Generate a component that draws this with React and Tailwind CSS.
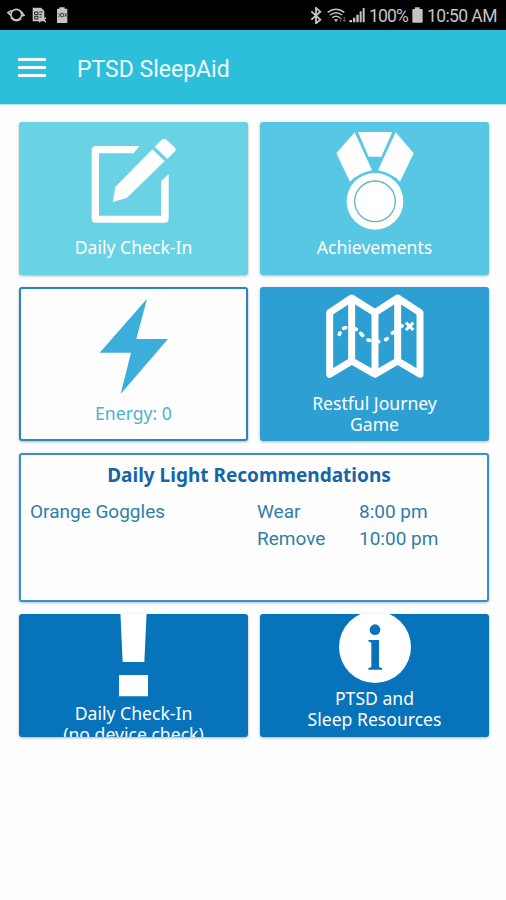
import React from 'react';
import clsx from 'clsx';

function StatusBar() {
  return (
    <div className="h-[30px] bg-black text-[#c4c4c4] flex items-center justify-between pl-[7px] pr-[9px]">
      <div className="flex items-center">
        <svg className="w-[18px] h-[16px]" viewBox="22 22 54 48" fill="none" stroke="currentColor" strokeWidth="5">
          <circle cx="50" cy="45" r="16" />
          <path d="M36 32l-11 7 9 8M64 35l9 12-9 2M34 54q15 16 30 3" />
        </svg>
        <svg className="w-[15px] h-[16px] ml-[7px]" viewBox="95 22 45 48">
          <path d="M97 24h25l10 10v31H97z" fill="currentColor" />
          <path d="M103 37h10v8h-10zM103 50h10v8h-10zM117 37h10M117 45h8M118 52h6" fill="none" stroke="#222" strokeWidth="3" />
          <path d="M117 68l6-12M125 48l11 20M137 54l-14 10" stroke="currentColor" strokeWidth="4" />
        </svg>
        <svg className="w-[12px] h-[16px] ml-[9px]" viewBox="168 22 36 48">
          <path d="M178 23h16v4h8v43h-31V27h7z" fill="currentColor" />
          <path d="M174 41l6 6-6 6M182 41h8v10h-8zM194 41l6 10M200 41l-6 10" fill="none" stroke="#333" strokeWidth="2.5" />
        </svg>
      </div>
      <div className="flex items-center">
        <svg className="w-[12px] h-[17px]" viewBox="56 20 36 51" fill="none" stroke="currentColor" strokeWidth="5.5">
          <path d="M60 33l27 25-13 11V23l13 11-27 24" />
        </svg>
        <svg className="w-[20px] h-[15px] ml-[5px]" viewBox="108 21 60 45" fill="none" stroke="currentColor" strokeWidth="4.5">
          <path d="M110 34q25-19 50 0M117 42q18-14 36 0M124 50q11-9 22 0" />
          <path d="M128 55h14l-7 8z" fill="currentColor" stroke="none" />
          <path d="M149 50v13M145 54l4-5 4 5M160 48v14M156 57l4 5 4-5" stroke="#777" strokeWidth="2.5" />
        </svg>
        <svg className="w-[16px] h-[16px] ml-[2px]" viewBox="175 22 48 48" fill="currentColor">
          <path d="M176 68v-7h8v7zM187 68V54h7v14zM197 68V45h7v23zM207 68V35h6v33zM216 68V25h6v43z" />
        </svg>
        <span className="w-[40px] ml-[4px] text-[17.5px] leading-[20px] tracking-[-0.8px] whitespace-nowrap pt-[2px]">100%</span>
        <svg className="w-[11px] h-[16px] ml-[3px]" viewBox="366 22 33 48" fill="currentColor">
          <path d="M375 23h14v5h6q3 0 3 3v35q0 3-3 3h-25q-3 0-3-3V31q0-3 3-3h5z" />
        </svg>
        <span className="w-[70px] ml-[4px] text-[17.5px] leading-[20px] tracking-[-0.6px] whitespace-nowrap pt-[2px]">10:50 AM</span>
      </div>
    </div>
  );
}

function CheckInIcon() {
  return (
    <svg className="w-[88px] h-[86px] mt-[16px] ml-[1px] shrink-0" viewBox="240 78 264 258" fill="#fff">
      <path d="M388 102L371 124H267V311H453V208L476 187V320Q476 332 464 332H257Q245 332 245 320V114Q245 102 257 102Z" />
      <path d="M427 112L464 147L350 258L308 270L316 225Z" />
      <path d="M434 104L455 83Q462 78 469 83L495 107Q500 112 495 118L472 141Z" />
    </svg>
  );
}

function MedalIcon() {
  return (
    <svg className="w-[80px] h-[100px] mt-[9px] shrink-0" viewBox="245 58 240 300" fill="#fff">
      <path d="M304 62L249 125L290 210Q315 184 356 176Z" />
      <path d="M427 62L481 125L440 210Q415 184 374 176Z" />
      <path d="M314 61H417L384 135H346Z" />
      <circle cx="365" cy="269" r="85" />
      <circle cx="365" cy="269" r="61" fill="none" stroke="#62b3bd" strokeWidth="4" />
    </svg>
  );
}

function BoltIcon() {
  return (
    <svg className="w-[70px] h-[98px] mt-[9px] shrink-0" viewBox="266 57 210 294" fill="#3caedb">
      <path d="M410 59L268 221H362L331 345L473 180H378Z" />
    </svg>
  );
}

function MapIcon() {
  return (
    <svg className="w-[100px] h-[86px] mt-[6px] shrink-0" viewBox="216 39 300 258" fill="none" stroke="#fff">
      <path
        d="M230 98L296 54L366 98L434 54L501 98V283L434 243L366 283L296 243L230 283ZM296 54V243M366 98V283M434 54V243"
        strokeWidth="21"
        strokeLinejoin="round"
      />
      <g strokeWidth="11" strokeLinecap="round">
        <path d="M259 163l2-4M272 145l6-2M308 147l2 1M323 160l6 6M345 180l5 1M373 186l4-1M398 179l5-3M418 159l5-3M444 139l3-1" />
      </g>
      <path d="M459 128l22 22M481 128l-22 22" strokeWidth="9" />
    </svg>
  );
}

function ExclamationIcon() {
  return (
    <svg className="w-[30px] h-[84px] shrink-0" viewBox="327 26 90 252" fill="#fff">
      <path d="M331 20H410L403 170H338Z" />
      <path d="M327 209H414V273H327Z" />
    </svg>
  );
}

function InfoIcon() {
  return (
    <svg className="w-[74px] h-[72px] shrink-0" viewBox="263 26 222 216">
      <circle cx="374" cy="125" r="108" fill="#fff" />
      <g fill="#0673ba">
        <circle cx="374" cy="73" r="16" />
        <path d="M354 104H386V185L395 189V193H354V189L363 185V112L354 108Z" />
      </g>
    </svg>
  );
}

function Tile({ icon, lines, className, labelClassName }) {
  return (
    <button
      className={clsx(
        'flex flex-col items-center overflow-hidden rounded-[3px] text-[17.6px] leading-[21px]',
        "font-['Noto_Sans',sans-serif] shadow-[0_1px_3px_rgba(0,0,0,0.3)]",
        className
      )}
    >
      {icon}
      <span className={clsx('flex flex-col items-center whitespace-nowrap shrink-0', labelClassName)}>
        {lines.map((line) => (
          <span key={line}>{line}</span>
        ))}
      </span>
    </button>
  );
}

export default function App() {
  return (
    <div className="w-[506px] h-[900px] overflow-hidden bg-[#fefefe] font-[Roboto,sans-serif]">
      <StatusBar />
      <header className="h-[74px] bg-[#2cbfdb] flex items-center pl-[18px] text-[#f0fdff] shadow-[0_1px_1px_rgba(44,191,219,0.35)]">
        <div className="flex flex-col gap-[5px] w-[28px]">
          <div className="h-[3px] bg-current" />
          <div className="h-[3px] bg-current" />
          <div className="h-[3px] bg-current" />
        </div>
        <h1 className="ml-[31px] text-[23px] leading-[28px] pt-[6px] whitespace-nowrap">PTSD SleepAid</h1>
      </header>

      <main className="pt-[18px] pl-[19px] pr-[17px] flex flex-col gap-[12px]">
        <div className="grid grid-cols-2 gap-[12px]">
          <Tile
            icon={<CheckInIcon />}
            lines={['Daily Check-In']}
            className="h-[153px] bg-[#69d2e5] text-white"
            labelClassName="mt-[13px]"
          />
          <Tile
            icon={<MedalIcon />}
            lines={['Achievements']}
            className="h-[153px] bg-[#58c7e3] text-white"
            labelClassName="mt-[6px]"
          />
        </div>

        <div className="grid grid-cols-2 gap-[12px]">
          <Tile
            icon={<BoltIcon />}
            lines={['Energy: 0']}
            className="h-[154px] bg-[#fefefe] border-2 border-[#2b86bd] text-[#4db3cf]"
            labelClassName="mt-[7px]"
          />
          <Tile
            icon={<MapIcon />}
            lines={['Restful Journey', 'Game']}
            className="h-[154px] bg-[#2d9fd2] text-white"
            labelClassName="mt-[14px]"
          />
        </div>

        <section className="h-[149px] rounded-[3px] border-2 border-[#3b8fc2] bg-[#fefefe] shadow-[0_1px_3px_rgba(0,80,140,0.35)]">
          <h2 className="mt-[8px] ml-[-10px] text-center font-['Noto_Sans',sans-serif] font-bold text-[19px] leading-[24px] text-[#1565a7]">
            Daily Light Recommendations
          </h2>
          <div className="mt-[11px] pl-[9px] grid grid-cols-[227px_102px_1fr] text-[19px] leading-[27px] text-[#2f7fa6]">
            <span>Orange Goggles</span>
            <span>Wear</span>
            <span>8:00 pm</span>
            <span className="col-start-2">Remove</span>
            <span>10:00 pm</span>
          </div>
        </section>

        <div className="grid grid-cols-2 gap-[12px]">
          <Tile
            icon={<ExclamationIcon />}
            lines={['Daily Check-In', '(no device check)']}
            className="h-[123px] bg-[#0673ba] text-white"
            labelClassName="mt-[5px]"
          />
          <Tile
            icon={<InfoIcon />}
            lines={['PTSD and', 'Sleep Resources']}
            className="h-[123px] bg-[#0673ba] text-white"
            labelClassName="mt-[2px]"
          />
        </div>
      </main>
    </div>
  );
}
